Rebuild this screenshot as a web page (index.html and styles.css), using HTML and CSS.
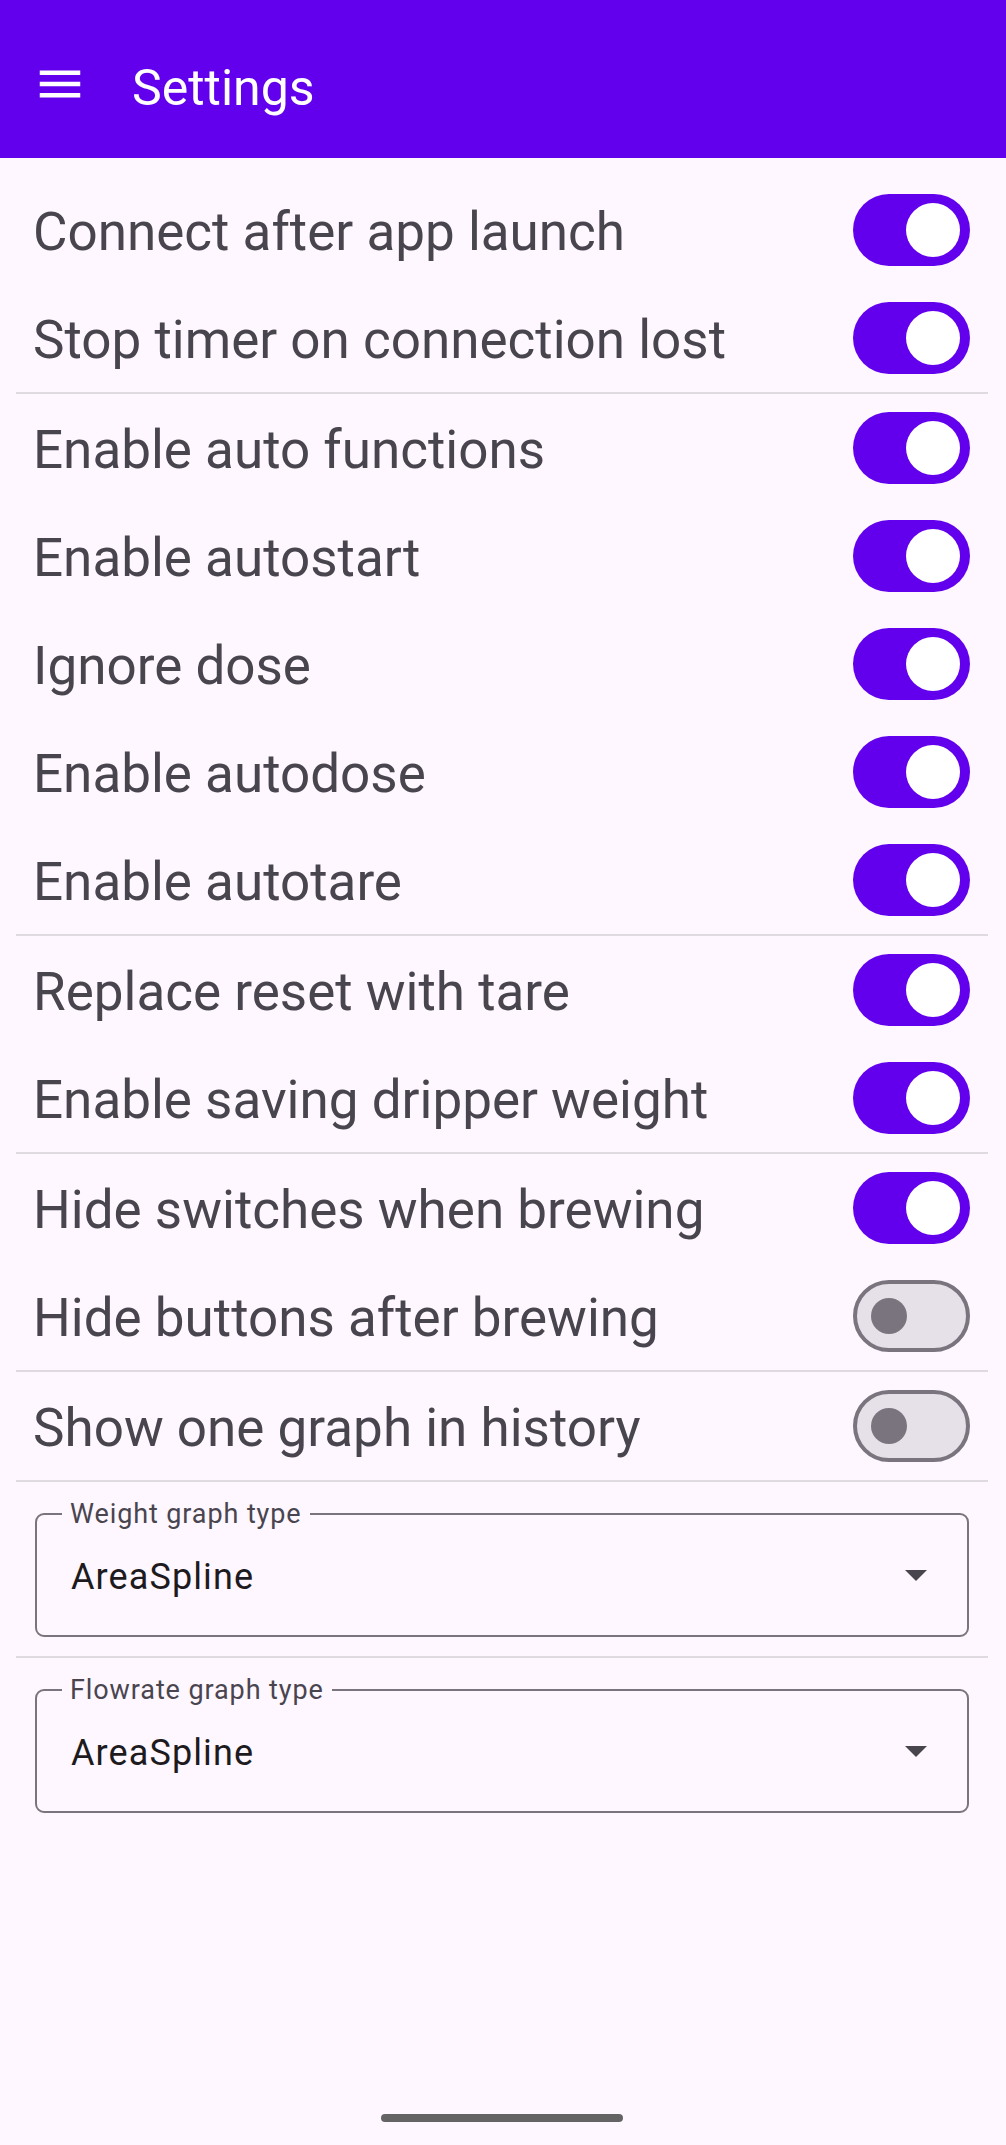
FILE: index.html
```html
<!DOCTYPE html>
<html lang="en">
<head>
<meta charset="utf-8">
<title>Settings</title>
<link rel="stylesheet" href="styles.css">
</head>
<body>
<header class="appbar">
  <svg class="menu-icon" viewBox="0 0 24 24" width="54" height="54" aria-hidden="true">
    <path d="M3 18h18v-2H3v2zm0-5h18v-2H3v2zm0-7v2h18V6H3z" fill="#ffffff"/>
  </svg>
  <h1 class="title">Settings</h1>
</header>
<main class="settings">
  <div class="row"><span class="label">Connect after app launch</span><span class="switch on"><span class="thumb"></span></span></div>
  <div class="row"><span class="label">Stop timer on connection lost</span><span class="switch on"><span class="thumb"></span></span></div>
  <div class="divider"></div>
  <div class="row"><span class="label">Enable auto functions</span><span class="switch on"><span class="thumb"></span></span></div>
  <div class="row"><span class="label">Enable autostart</span><span class="switch on"><span class="thumb"></span></span></div>
  <div class="row"><span class="label">Ignore dose</span><span class="switch on"><span class="thumb"></span></span></div>
  <div class="row"><span class="label">Enable autodose</span><span class="switch on"><span class="thumb"></span></span></div>
  <div class="row"><span class="label">Enable autotare</span><span class="switch on"><span class="thumb"></span></span></div>
  <div class="divider"></div>
  <div class="row"><span class="label">Replace reset with tare</span><span class="switch on"><span class="thumb"></span></span></div>
  <div class="row"><span class="label">Enable saving dripper weight</span><span class="switch on"><span class="thumb"></span></span></div>
  <div class="divider"></div>
  <div class="row"><span class="label">Hide switches when brewing</span><span class="switch on"><span class="thumb"></span></span></div>
  <div class="row"><span class="label">Hide buttons after brewing</span><span class="switch off"><span class="thumb"></span></span></div>
  <div class="divider"></div>
  <div class="row"><span class="label">Show one graph in history</span><span class="switch off"><span class="thumb"></span></span></div>
  <div class="divider"></div>
  <div class="field-block">
    <div class="field">
      <span class="field-label">Weight graph type</span>
      <span class="field-value">AreaSpline</span>
      <svg class="arrow" viewBox="0 0 22 11" width="22" height="11" aria-hidden="true"><polygon points="0,0 22,0 11,11" fill="#49454F"/></svg>
    </div>
  </div>
  <div class="divider"></div>
  <div class="field-block">
    <div class="field">
      <span class="field-label">Flowrate graph type</span>
      <span class="field-value">AreaSpline</span>
      <svg class="arrow" viewBox="0 0 22 11" width="22" height="11" aria-hidden="true"><polygon points="0,0 22,0 11,11" fill="#49454F"/></svg>
    </div>
  </div>
</main>
<div class="gesture-bar"></div>
</body>
</html>
```

FILE: styles.css
```css
html, body {
  margin: 0;
  padding: 0;
}
body {
  width: 1006px;
  height: 2145px;
  overflow: hidden;
  background: #FEF7FF;
  font-family: Roboto, "Noto Sans", "Liberation Sans", sans-serif;
  position: relative;
}
.appbar {
  height: 158px;
  background: #6200EE;
  display: flex;
  align-items: flex-start;
  box-sizing: border-box;
}
.menu-icon {
  display: block;
  margin-left: 33px;
  margin-top: 57px;
  flex: none;
}
.title {
  margin: 63px 0 0 45px;
  font-size: 50px;
  line-height: 50px;
  font-weight: 400;
  color: #ffffff;
}
.settings {
  padding-top: 18px;
}
.row {
  height: 108px;
  display: flex;
  align-items: center;
  justify-content: space-between;
  padding: 0 36px 0 33px;
}
.label {
  font-size: 53px;
  color: #49454F;
  padding-top: 3px;
}
.divider {
  height: 2px;
  background: #DEDAE0;
  margin: 0 18px 0 16px;
}
.switch {
  flex: none;
  width: 117px;
  height: 72px;
  border-radius: 36px;
  box-sizing: border-box;
  display: flex;
  align-items: center;
}
.switch.on {
  background: #6200EE;
  justify-content: flex-end;
  padding-right: 10px;
}
.switch.on .thumb {
  width: 54px;
  height: 54px;
  border-radius: 50%;
  background: #ffffff;
}
.switch.off {
  background: #E6E0E9;
  border: 4px solid #79747E;
  padding-left: 14px;
}
.switch.off .thumb {
  width: 36px;
  height: 36px;
  border-radius: 50%;
  background: #79747E;
}
.field-block {
  padding: 31px 37px 19px 35px;
}
.field {
  position: relative;
  height: 124px;
  box-sizing: border-box;
  border: 2px solid #79747E;
  border-radius: 9px;
  display: flex;
  align-items: center;
  justify-content: space-between;
  padding: 4px 40px 0 34px;
}
.field-label {
  position: absolute;
  top: -17px;
  left: 25px;
  padding: 0 8px;
  background: #FEF7FF;
  font-size: 27px;
  line-height: 32px;
  letter-spacing: 0.9px;
  color: #49454F;
}
.field-value {
  font-size: 36px;
  letter-spacing: 1.1px;
  color: #1D1B20;
}
.arrow {
  display: block;
  flex: none;
  margin-top: -4px;
}
.gesture-bar {
  position: absolute;
  left: 381px;
  bottom: 23px;
  width: 242px;
  height: 8px;
  border-radius: 4px;
  background: #646464;
}
```
